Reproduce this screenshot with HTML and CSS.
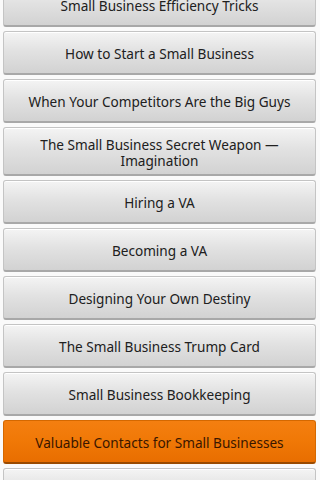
FILE: index.html
```html
<!DOCTYPE html>
<html>
<head>
<meta charset="utf-8">
<link rel="stylesheet" href="styles.css">
</head>
<body>
<div class="screen">
  <div class="list">
    <div class="btn">Small Business Efficiency Tricks</div>
    <div class="btn">How to Start a Small Business</div>
    <div class="btn">When Your Competitors Are the Big Guys</div>
    <div class="btn two">The Small Business Secret Weapon —<br>Imagination</div>
    <div class="btn">Hiring a VA</div>
    <div class="btn">Becoming a VA</div>
    <div class="btn">Designing Your Own Destiny</div>
    <div class="btn">The Small Business Trump Card</div>
    <div class="btn">Small Business Bookkeeping</div>
    <div class="btn active">Valuable Contacts for Small Businesses</div>
    <div class="btn">Marketing Your Small Business</div>
  </div>
</div>
</body>
</html>
```

FILE: styles.css
```css
html, body {
  margin: 0;
  padding: 0;
  background: #ffffff;
}
.screen {
  width: 320px;
  height: 480px;
  overflow: hidden;
  background: #fafafa;
}
.list {
  display: flex;
  flex-direction: column;
  gap: 4px;
  padding: 0 4px 0 3px;
  margin-top: -17px;
}
.btn {
  box-sizing: border-box;
  min-height: 44px;
  display: flex;
  align-items: center;
  justify-content: center;
  text-align: center;
  font-family: "Noto Sans", "Open Sans", sans-serif;
  font-size: 13.6px;
  line-height: 16px;
  color: #202020;
  background: linear-gradient(to bottom, #f4f4f4 0%, #e2e2e2 45%, #d2d2d2 100%);
  border: 1px solid #c4c4c4;
  border-bottom: 2px solid #a8a8a8;
  border-radius: 3px;
  box-shadow: inset 0 1px 0 #ffffff;
  padding: 8px 8px 6px;
}
.btn.two {
  min-height: 49px;
  padding: 9px 8px 5px;
}
.btn.active {
  background: linear-gradient(to bottom, #f47f10 0%, #f07806 50%, #e86e00 100%);
  border-color: #d46800;
  border-bottom-color: #9a4a00;
  box-shadow: none;
  color: #3a1600;
}
```
